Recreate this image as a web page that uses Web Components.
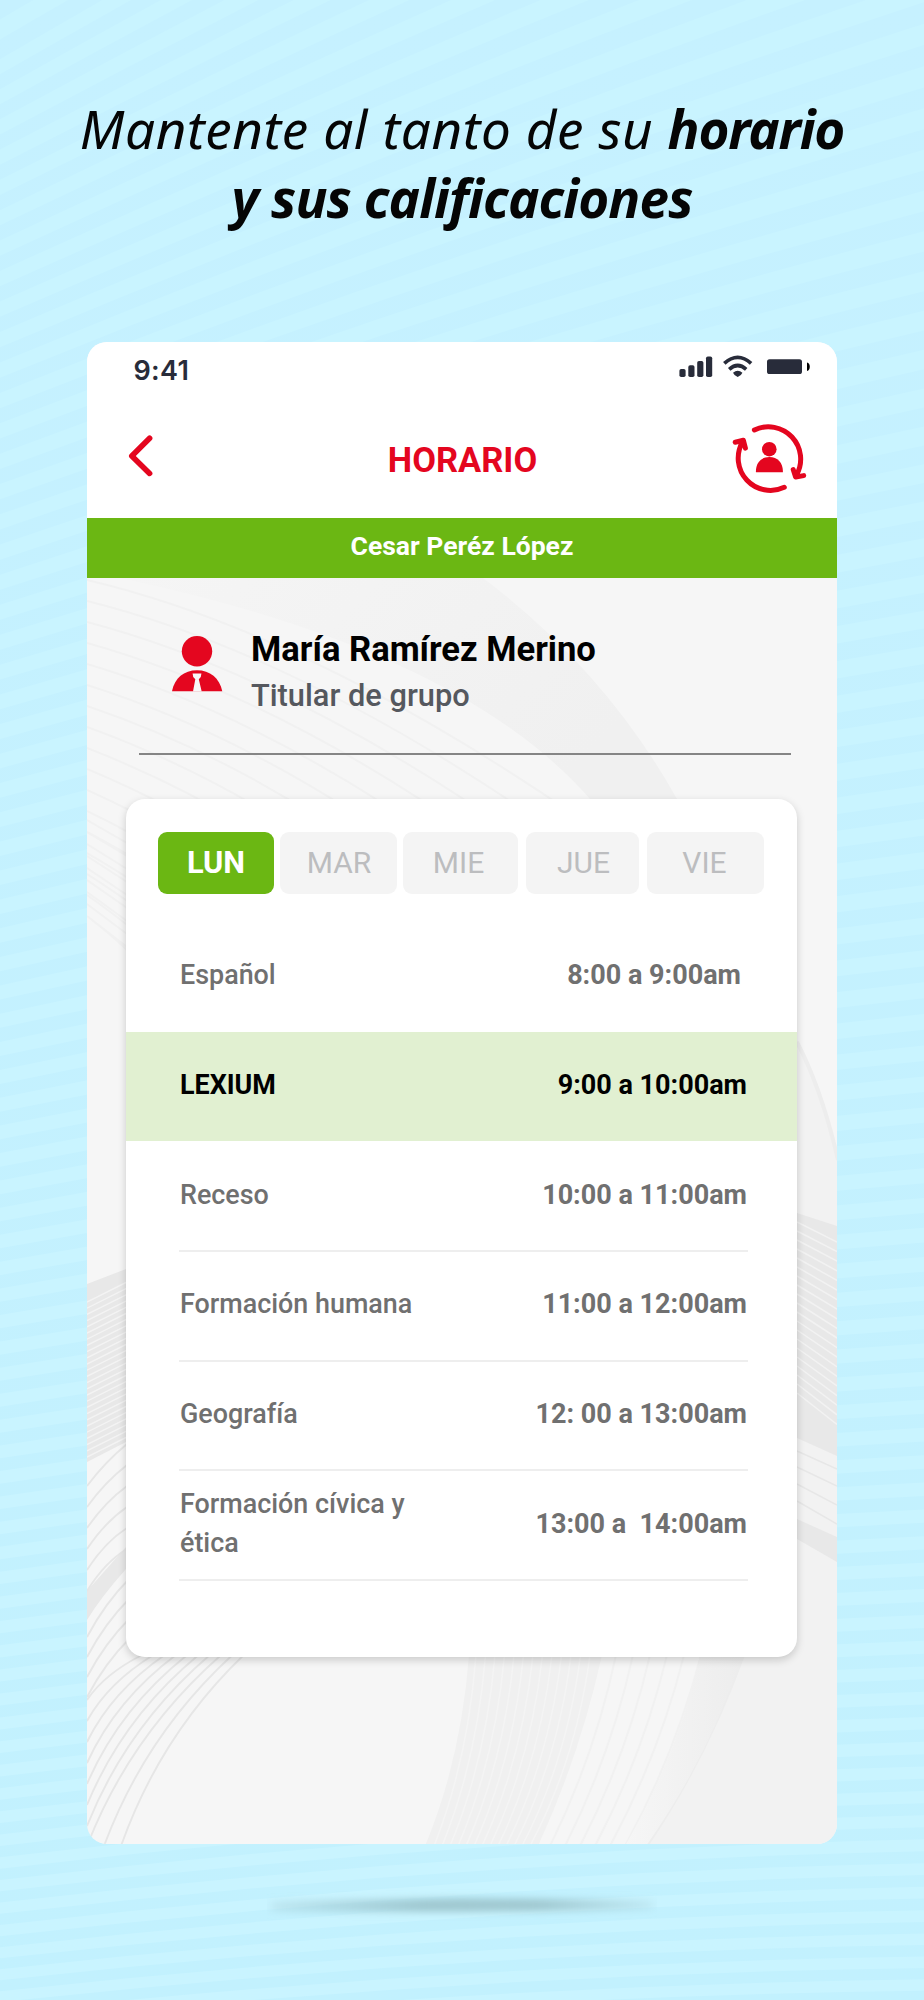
<!DOCTYPE html>
<html lang="es">
<head>
<meta charset="utf-8">
<title>Horario</title>
<style>
html,body{margin:0;padding:0}
body{width:924px;height:2000px;overflow:hidden;font-family:Roboto,"Liberation Sans",sans-serif}
</style>
</head>
<body>
<promo-page>
  <promo-title slot="title"></promo-title>
  <phone-screen>
    <status-bar></status-bar>
    <nav-bar>HORARIO</nav-bar>
    <student-bar>Cesar Peréz López</student-bar>
    <teacher-card>María Ramírez Merino<span slot="role">Titular de grupo</span></teacher-card>
    <schedule-card>
      <day-tab slot="days" active style="width:116px;margin-right:6px">LUN</day-tab>
      <day-tab slot="days" style="width:117px;margin-right:6px;--nudge:.5px">MAR</day-tab>
      <day-tab slot="days" style="width:115px;margin-right:8px;--nudge:-2px">MIE</day-tab>
      <day-tab slot="days" style="width:113px;margin-right:8px;--nudge:1px">JUE</day-tab>
      <day-tab slot="days" style="width:117px;--nudge:-1px">VIE</day-tab>
      <class-row plain>Español<span slot="time" style="margin-right:6px">8:00 a 9:00am</span></class-row>
      <class-row active>LEXIUM<span slot="time">9:00 a 10:00am</span></class-row>
      <class-row>Receso<span slot="time">10:00 a 11:00am</span></class-row>
      <class-row>Formación humana<span slot="time">11:00 a 12:00am</span></class-row>
      <class-row>Geografía<span slot="time">12: 00 a 13:00am</span></class-row>
      <class-row>Formación cívica y ética<span slot="time">13:00 a&nbsp; 14:00am</span></class-row>
    </schedule-card>
  </phone-screen>
</promo-page>
<script>
function define(name, html, setup) {
  customElements.define(name, class extends HTMLElement {
    constructor() {
      super();
      const root = this.attachShadow({ mode: 'open' });
      root.innerHTML = html;
      if (setup) setup(root);
    }
  });
}

define('promo-page', `
<style>
:host{display:flex;flex-direction:column;align-items:center;position:relative;width:924px;height:2000px;overflow:hidden;background:#c9f4ff;isolation:isolate}
.bg{position:absolute;inset:0;z-index:-1}
header{height:341.500px;width:100%;flex:none}
.shadow{width:390px;height:34px;margin-top:44px;flex:none}
</style>
<svg class="bg" width="924" height="2000" viewBox="0 0 924 2000"><defs><linearGradient id="g" gradientUnits="userSpaceOnUse" x1="0" y1="0" x2="0" y2="2000"><stop offset="0" stop-color="#c6f1ff"/><stop offset="1" stop-color="#c2f1fe"/></linearGradient></defs><path id="stripes" fill="url(#g)"/></svg>
<header><slot name="title"></slot></header>
<slot></slot>
<svg class="shadow" viewBox="0 0 382 34" preserveAspectRatio="none"><defs><filter id="b" x="-10%" y="-100%" width="120%" height="300%"><feGaussianBlur stdDeviation="5 3.5"/></filter>
<linearGradient id="s"><stop offset="0" stop-color="#a2cbd4" stop-opacity=".3"/><stop offset=".4" stop-color="#a0c9d1"/><stop offset=".7" stop-color="#a0c9d1"/><stop offset="1" stop-color="#a2cbd4" stop-opacity=".25"/></linearGradient></defs>
<path filter="url(#b)" fill="url(#s)" d="M4 13L190 10L378 12V22L190 24L4 24Z"/></svg>
`, root => {
  // Stripes fan out: steep and wide at the top of the page, nearly level and tight at the bottom.
  const y = (t, x) => {
    const slope = 0.44 * Math.exp(-Math.max(t, -200) / 1000);
    return t - slope * (x - 462) + 0.00005 * (x - 462) * (x - 462);
  };
  const edge = t => 2 * y(t, 462) - (y(t, 0) + y(t, 924)) / 2;
  let d = '';
  for (let t = -300; t < 2100;) {
    const step = 38 - 0.008 * t;
    const u = t + step / 2;
    d += `M0 ${y(t, 0)}Q462 ${edge(t)} 924 ${y(t, 924)}L924 ${y(u, 924)}Q462 ${edge(u)} 0 ${y(u, 0)}Z`;
    t += step;
  }
  root.getElementById('stripes').setAttribute('d', d);
});

define('promo-title', `
<style>
:host{display:block;padding-top:94px;text-align:center;font-family:"Noto Sans","Open Sans",sans-serif;font-style:italic;font-size:53px;line-height:69px;color:#050505;white-space:nowrap}
div{height:69px;display:flex;justify-content:center}
.a{letter-spacing:.6px;white-space:pre}
.b{letter-spacing:-1.200px}
.c{letter-spacing:-.85px}
</style>
<div><span class="a">Mantente al tanto de su </span><b class="b">horario</b></div>
<div><b class="c">y sus calificaciones</b></div>
`);

define('phone-screen', `
<style>
:host{display:flex;flex-direction:column;position:relative;width:750px;height:1502px;flex:none;border-radius:20px;overflow:hidden;background:#f6f6f6;isolation:isolate}
.wave{position:absolute;left:0;top:236px;z-index:-1}
</style>
<svg class="wave" width="750" height="1266" viewBox="87 578 750 1266" fill="none">
<defs>
<linearGradient id="top" x1="0" y1="0" x2="1" y2=".4"><stop offset="0" stop-color="#f5f5f5"/><stop offset="1" stop-color="#f0f0f0"/></linearGradient>
<linearGradient id="edge"><stop offset="0" stop-color="#f6f6f6"/><stop offset="1" stop-color="#ededed"/></linearGradient>
</defs>
<path fill="url(#top)" d="M120 578H483Q605 670 677 799H590Q460 650 120 578Z"/>
<path id="l1" stroke="#f1f1f1" stroke-width="2"/>
<path fill="#f2f2f2" d="M797 1040Q822 1085 837 1155V1844H647Q720 1710 742 1657L797 1500Z"/>
<path stroke="#ededed" stroke-width="4" d="M797 1042Q822 1090 838 1160M743 1655Q705 1760 646 1846"/>
<path fill="#e8e8e8" d="M797 1213L837 1226V1456L797 1438Z M797 1519L837 1537V1562L797 1539Z"/>
<path id="l2" stroke="#f2f2f2" stroke-width="1.5"/>
<path stroke="#e7e7e7" stroke-width="1.5" d="M797 1451L837 1469M797 1467L837 1486M797 1484L837 1505M797 1501L837 1524"/>
<path fill="#e8e8e8" d="M87 1284L126 1269V1442L87 1462Z M87 1591L126 1547V1569Q101 1597 87 1620Z"/>
<path id="l3" stroke="#f3f3f3" stroke-width="1.4"/>
<path id="l4" stroke="#e6e6e6" stroke-width="1.9"/>
<path fill="#f0f0f0" d="M469 1655H602Q580 1755 538 1846H425Q461 1760 469 1655Z"/>
<path id="l5" stroke="#f4f4f4" stroke-width="1.5"/>
<path id="l6" stroke="#f1f1f1" stroke-width="2"/>
<path fill="url(#edge)" d="M700 1655H742Q710 1755 646 1846H625Q680 1750 700 1655Z"/>
</svg>
<slot></slot>
`, root => {
  const set = (id, d) => root.getElementById(id).setAttribute('d', d);
  let d = '';
  for (let i = 0; i < 17; i++) d += `M87 ${580 + i * 21}Q${300 - i * 8} ${630 + i * 22} ${560 - i * 26} ${805 + i * 12}`;
  for (let i = 0; i < 9; i++) d += `M87 ${820 + i * 12}L127 ${843 + i * 13}`;
  set('l1', d);
  d = '';
  for (let i = 0; i < 20; i++) d += `M797 ${1222 + i * 9}L837 ${1242 + i * 9.6}`;
  set('l2', d);
  d = '';
  for (let i = 0; i < 26; i++) d += `M87 ${1302 + i * 6.2}L127 ${1282 + i * 6.2}`;
  set('l3', d);
  d = '';
  for (let i = 0; i < 6; i++) d += `M87 ${1486 + i * 21}Q105 ${1462 + i * 20} 127 ${1444 + i * 21}`;
  for (let i = 0; i < 4; i++) d += `M87 ${1637 + i * 20}Q105 ${1603 + i * 20} 130 ${1578 + i * 20}`;
  // Lower-left arcs run from the screen edge up behind the card.
  for (let i = 0; i < 10; i++) {
    const x0 = 87 + Math.max(0, i - 7) * 17;
    const y0 = i < 7 ? 1700 + i * 21 : 1846;
    const x1 = 142 + i * 11.3;
    d += `M${x0} ${y0}Q${x0 + (x1 - x0) * 0.32} ${y0 - (y0 - 1655) * 0.58} ${x1} 1655`;
  }
  set('l4', d);
  d = '';
  for (let i = 0; i < 13; i++) d += `M${476 + i * 9.5} 1655Q${468 + i * 9} 1760 ${434 + i * 8} 1846`;
  set('l5', d);
  d = '';
  for (let i = 0; i < 6; i++) d += `M${616 + i * 17} 1655Q${595 + i * 16} 1755 ${550 + i * 15} 1846`;
  set('l6', d);
});

define('status-bar', `
<style>
:host{display:flex;justify-content:space-between;height:56px;background:#fff;color:#282c3a;font:600 27px/32px Inter,sans-serif}
.time{padding:13.500px 0 0 46.500px;letter-spacing:.3px}
svg{margin-right:22px}
</style>
<span class="time">9:41</span>
<svg width="140" height="56" viewBox="675 342 140 56" fill="#282c3a">
<rect x="679.4" y="369" width="6.2" height="8" rx="1.8"/><rect x="688.3" y="365.3" width="6.2" height="11.7" rx="1.8"/><rect x="697.2" y="361" width="6.2" height="16" rx="1.8"/><rect x="706" y="356.5" width="6.2" height="20.5" rx="1.8"/>
<path fill="none" stroke="#282c3a" stroke-width="3.7" d="M724.3 363.4Q737.7 351.4 751.1 363.4M729.2 369.3Q737.7 361.8 746.2 369.3"/>
<path d="M733 372.8Q737.7 368.6 742.4 372.8Q741.8 375 737.7 377Q733.6 375 733 372.8Z"/>
<rect x="767" y="359.2" width="35" height="14.8" rx="2.6"/><path fill="#000" d="M807 362.5Q809.8 363.4 809.8 366.7T807 371Z"/>
</svg>
`);

define('nav-bar', `
<style>
:host{display:grid;grid-template-columns:170px 1fr 170px;align-items:center;height:120.500px;background:#fff;color:#e4061f;font-weight:700;font-size:34.500px}
.t{text-align:center;padding-top:4px;padding-left:1px;white-space:nowrap}
svg{display:block;fill:none;stroke:#e4061f;stroke-linecap:round;stroke-linejoin:round;stroke-width:5}
.back{stroke-width:5.600px}
</style>
<svg class="back" width="170" height="120" viewBox="87 398 170 120"><path d="M149.6 438.2L131.8 456L149.6 473.4"/></svg>
<span class="t"><slot></slot></span>
<svg width="170" height="120" viewBox="667 398 170 120">
<path d="M754.4 430A32.3 32.3 0 0 1 796.5 475M793.2 469.6L795.6 477L803.7 475.6M784.3 487.3A32.3 32.3 0 0 1 742.5 442M735.2 442.2L743.4 440.3L745.4 448.2"/>
<g fill="#e4061f" stroke="none"><circle cx="769.3" cy="449.2" r="7.3"/><path d="M755.9 472.3C755.6 463 761 457 769.4 457S783.2 463 782.9 472.3Z"/></g>
</svg>
`);

define('student-bar', `
<style>
:host{display:flex;align-items:center;justify-content:center;height:60px;padding-bottom:6px;box-sizing:border-box;background:#6bb713;color:#fff;font-weight:700;font-size:26.500px}
</style><slot></slot>`);

define('teacher-card', `
<style>
:host{display:flex;height:177px;box-sizing:border-box;margin:0 46px 0 52px;border-bottom:2px solid #858585;padding:53px 0 0 31px;gap:27px}
svg{margin-top:2px;flex:none}
.n{font-weight:700;font-size:34.600px;line-height:40px;margin-top:-2px;color:#000;white-space:nowrap}
.r{font-weight:500;font-size:30.800px;line-height:36px;margin-top:9px;color:#55585e}
</style>
<svg width="54" height="60" viewBox="170 633 54 60"><g fill="#e4061f"><circle cx="197" cy="651.3" r="15.2"/><path d="M172 691.3C174.5 678 184 670.2 197 670.2S219.500 678 222.300 691.3Z"/></g><path fill="#f8f8f8" d="M192.600 673.600H201.400L200.800 677L198.800 679.300L201.700 691.500H193L195.300 679.300L193.200 677Z"/></svg>
<div><div class="n"><slot></slot></div><div class="r"><slot name="role"></slot></div></div>
`);

define('schedule-card', `
<style>
:host{display:block;width:671px;height:858px;box-sizing:border-box;margin:44px 0 0 39px;border-radius:19px;background:#fff;box-shadow:0 3px 9px rgba(0,0,0,.18)}
nav{display:flex;padding:33px 0 0 32px;height:90px}
</style>
<nav><slot name="days"></slot></nav>
<slot></slot>
`);

define('day-tab', `
<style>
:host{display:flex;align-items:center;justify-content:center;height:62px;box-sizing:border-box;padding-bottom:2px;border-radius:9px;background:#f4f4f4;color:#bcbdbf;font-size:30px;flex:none}
:host([active]){background:#6bb713;color:#fff;font-weight:700;font-size:30.800px}
span{padding-left:calc(10px + var(--nudge,0px) * 2);padding-right:10px}
</style><span><slot></slot></span>`);

define('class-row', `
<style>
:host{display:block;height:109.700px;padding:0 49px 0 53px;box-sizing:border-box;color:#707070;font-size:27px;line-height:38.300px}
.row{display:flex;justify-content:space-between;align-items:center;height:calc(100% + 1px);box-sizing:border-box;border-bottom:2px solid #eeeeee;padding:0 1px 2px 1px}
:host([plain]) .row,:host([active]) .row{border-color:transparent}
:host([active]){background:#e1f0d1;color:#000;font-weight:700}
.name{max-width:240px;font-weight:500;font-size:26.900px}
:host([active]) .name{font-weight:700}
.time{font-weight:700;white-space:nowrap}
</style>
<div class="row"><span class="name"><slot></slot></span><span class="time"><slot name="time"></slot></span></div>
`);
</script>
</body>
</html>
